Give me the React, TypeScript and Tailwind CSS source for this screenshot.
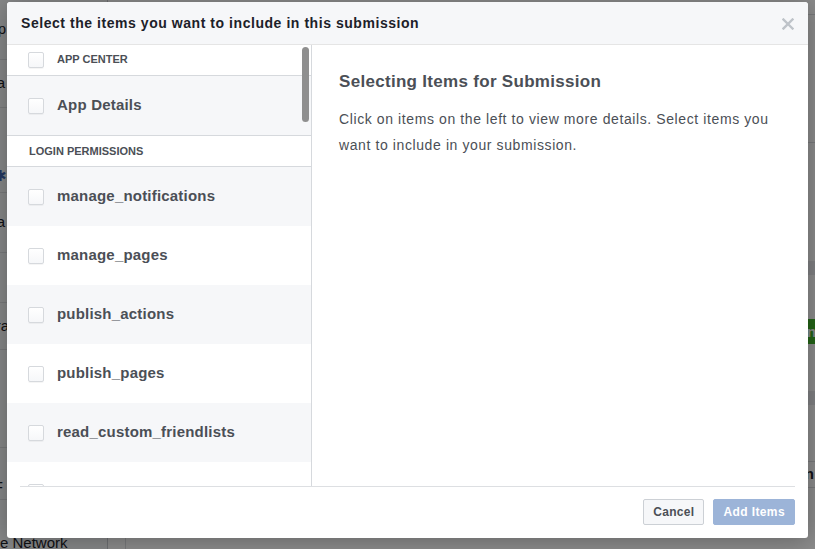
import React from "react"

// 提出アイテム選択ダイアログ

type Row = {
  label: string
  kind: "section" | "item" | "heading"
  shaded?: boolean
}

const rows: Row[] = [
  { label: "APP CENTER", kind: "section" },
  { label: "App Details", kind: "item", shaded: true },
  { label: "LOGIN PERMISSIONS", kind: "heading" },
  { label: "manage_notifications", kind: "item", shaded: true },
  { label: "manage_pages", kind: "item" },
  { label: "publish_actions", kind: "item", shaded: true },
  { label: "publish_pages", kind: "item" },
  { label: "read_custom_friendlists", kind: "item", shaded: true },
  { label: "", kind: "item" },
]

const font = { fontFamily: '"Liberation Sans", Arial, sans-serif' }

const Checkbox = () => (
  <span className="block w-[16px] h-[16px] shrink-0 rounded-[2px] border border-[#d6d9dd] bg-gradient-to-b from-white to-[#f6f7f9] shadow-[0_1px_0_rgba(0,0,0,0.04)]" />
)

const ListRow: React.FC<{ row: Row }> = ({ row }) => {
  if (row.kind === "heading") {
    return (
      <div className="h-[31px] flex items-center pl-[22px] border-b border-[#d6d9dd] bg-white">
        <span className="text-[11px] font-bold text-[#4b4f56]">{row.label}</span>
      </div>
    )
  }
  if (row.kind === "section") {
    return (
      <div className="h-[31px] flex items-center gap-[13px] pl-[21px] border-b border-[#d6d9dd] bg-white">
        <Checkbox />
        <span className="text-[11px] font-bold text-[#4b4f56] -mt-[1px]">{row.label}</span>
      </div>
    )
  }
  return (
    <div
      className={
        "h-[59px] shrink-0 flex items-center gap-[13px] pl-[21px] " +
        (row.shaded ? "bg-[#f6f7f9]" : "bg-white") +
        (row.label === "App Details" ? " border-b border-[#d6d9dd] h-[60px]" : "")
      }
    >
      <Checkbox />
      <span className="text-[15px] font-bold tracking-[0.2px] text-[#4b4f56]">{row.label}</span>
    </div>
  )
}

const BackdropPage = () => (
  <div className="absolute inset-0 bg-white text-[#1d2129] text-[15px]" style={font}>
    {/* left column of the page behind */}
    <div className="absolute left-[-60px] top-0 w-[168px] h-full border-r border-[#c9ccd1] bg-[#f6f7f9]">
      <div className="h-[60px] border-b border-[#dddfe2] flex items-center justify-end pr-[101px]">p</div>
      <div className="h-[48px] border-b border-[#dddfe2] flex items-center justify-end pr-[102px]">a</div>
      <div className="h-[85px] border-b border-[#dddfe2] flex items-end justify-end pr-[100px] pb-[5px] text-[#4267b2]">✱</div>
      <div className="h-[60px] border-b border-[#dddfe2] flex items-center justify-end pr-[102px]">a</div>
      <div className="h-[50px] border-b border-[#dddfe2]" />
      <div className="h-[47px] border-b border-[#dddfe2] flex items-center justify-end pr-[98px]">ra</div>
      <div className="h-[98px] border-b border-[#dddfe2]" />
      <div className="h-[52px] border-b border-[#dddfe2] flex items-end justify-end pr-[104px] pb-[1px]">F</div>
      <div className="pl-[60px] pt-[32px]">e Network</div>
    </div>
    {/* main area of the page behind */}
    <div className="absolute left-[125px] top-[14px] right-[-40px] bottom-[-20px] border border-[#dddfe2] bg-white">
      <div className="h-[128px] border-b border-[#dddfe2]" />
      <div className="h-[118px]" />
      <div className="h-[14px] bg-[#e9ebee]" />
      <div className="h-[44px]" />
      <div className="h-[25px] flex justify-end">
        <div className="w-[47px] bg-[#42b72a] text-white font-bold leading-[25px]">n</div>
      </div>
      <div className="h-[47px]" />
      <div className="h-[14px] bg-[#e9ebee]" />
      <div className="h-[57px] border-b border-[#dddfe2]" />
      <div className="h-[26px] border-b border-[#dddfe2] flex justify-end pr-[40px] items-center font-bold">on</div>
    </div>
  </div>
)

export default function App() {
  return (
    <div className="relative w-[815px] h-[549px] overflow-hidden" style={font}>
      <BackdropPage />
      <div className="absolute inset-0 bg-black/45" />

      <div className="absolute left-[7px] top-[2px] w-[801px] h-[536px] bg-white rounded-[3px] shadow-[0_2px_26px_rgba(0,0,0,0.3)] flex flex-col overflow-hidden">
        <div className="h-[43px] shrink-0 flex items-center justify-between pl-[14px] pr-[14px] bg-[#f6f7f9] border-b border-[#e5e5e5] rounded-t-[3px]">
          <h3 className="text-[14px] font-bold tracking-[0.55px] text-[#1d2129] pt-[1px]">Select the items you want to include in this submission</h3>
          <svg width="12" height="12" viewBox="0 0 12 12" className="mt-[1px]">
            <path d="M1.5 1.5 L10.5 10.5 M10.5 1.5 L1.5 10.5" stroke="#bec3c9" strokeWidth="2.4" strokeLinecap="square" />
          </svg>
        </div>

        <div className="h-[441px] shrink-0 flex">
          <div className="relative w-[305px] shrink-0 border-r border-[#d6d9dd] overflow-hidden">
            <div className="flex flex-col">
              {rows.map((r, i) => (
                <ListRow key={i} row={r} />
              ))}
            </div>
            <div className="absolute right-[2px] top-[2px] w-[7px] h-[75px] rounded-full bg-[#8f8f8f]" />
          </div>

          <div className="flex-1 pl-[27px] pt-[27px] pr-[30px]">
            <h2 className="text-[17px] font-bold tracking-[0.3px] leading-[20px] text-[#4b4f56]">Selecting Items for Submission</h2>
            <p className="mt-[14px] text-[14px] tracking-[0.6px] leading-[26px] text-[#4b4f56]">
              Click on items on the left to view more details. Select items you want to include in your submission.
            </p>
          </div>
        </div>

        <div className="mx-[13px] flex-1 border-t border-[#dddfe2] flex justify-end items-start pt-[12px] gap-[9px]">
          <button className="h-[26px] px-[9px] rounded-[2px] border border-[#ccd0d5] bg-[#f6f7f9] text-[12px] font-bold tracking-[0.3px] text-[#4b4f56]">
            Cancel
          </button>
          <button className="h-[26px] px-[9px] rounded-[2px] border border-[#9cb4d8] bg-[#9cb4d8] text-[12px] font-bold tracking-[0.4px] text-white">
            Add Items
          </button>
        </div>
      </div>
    </div>
  )
}
